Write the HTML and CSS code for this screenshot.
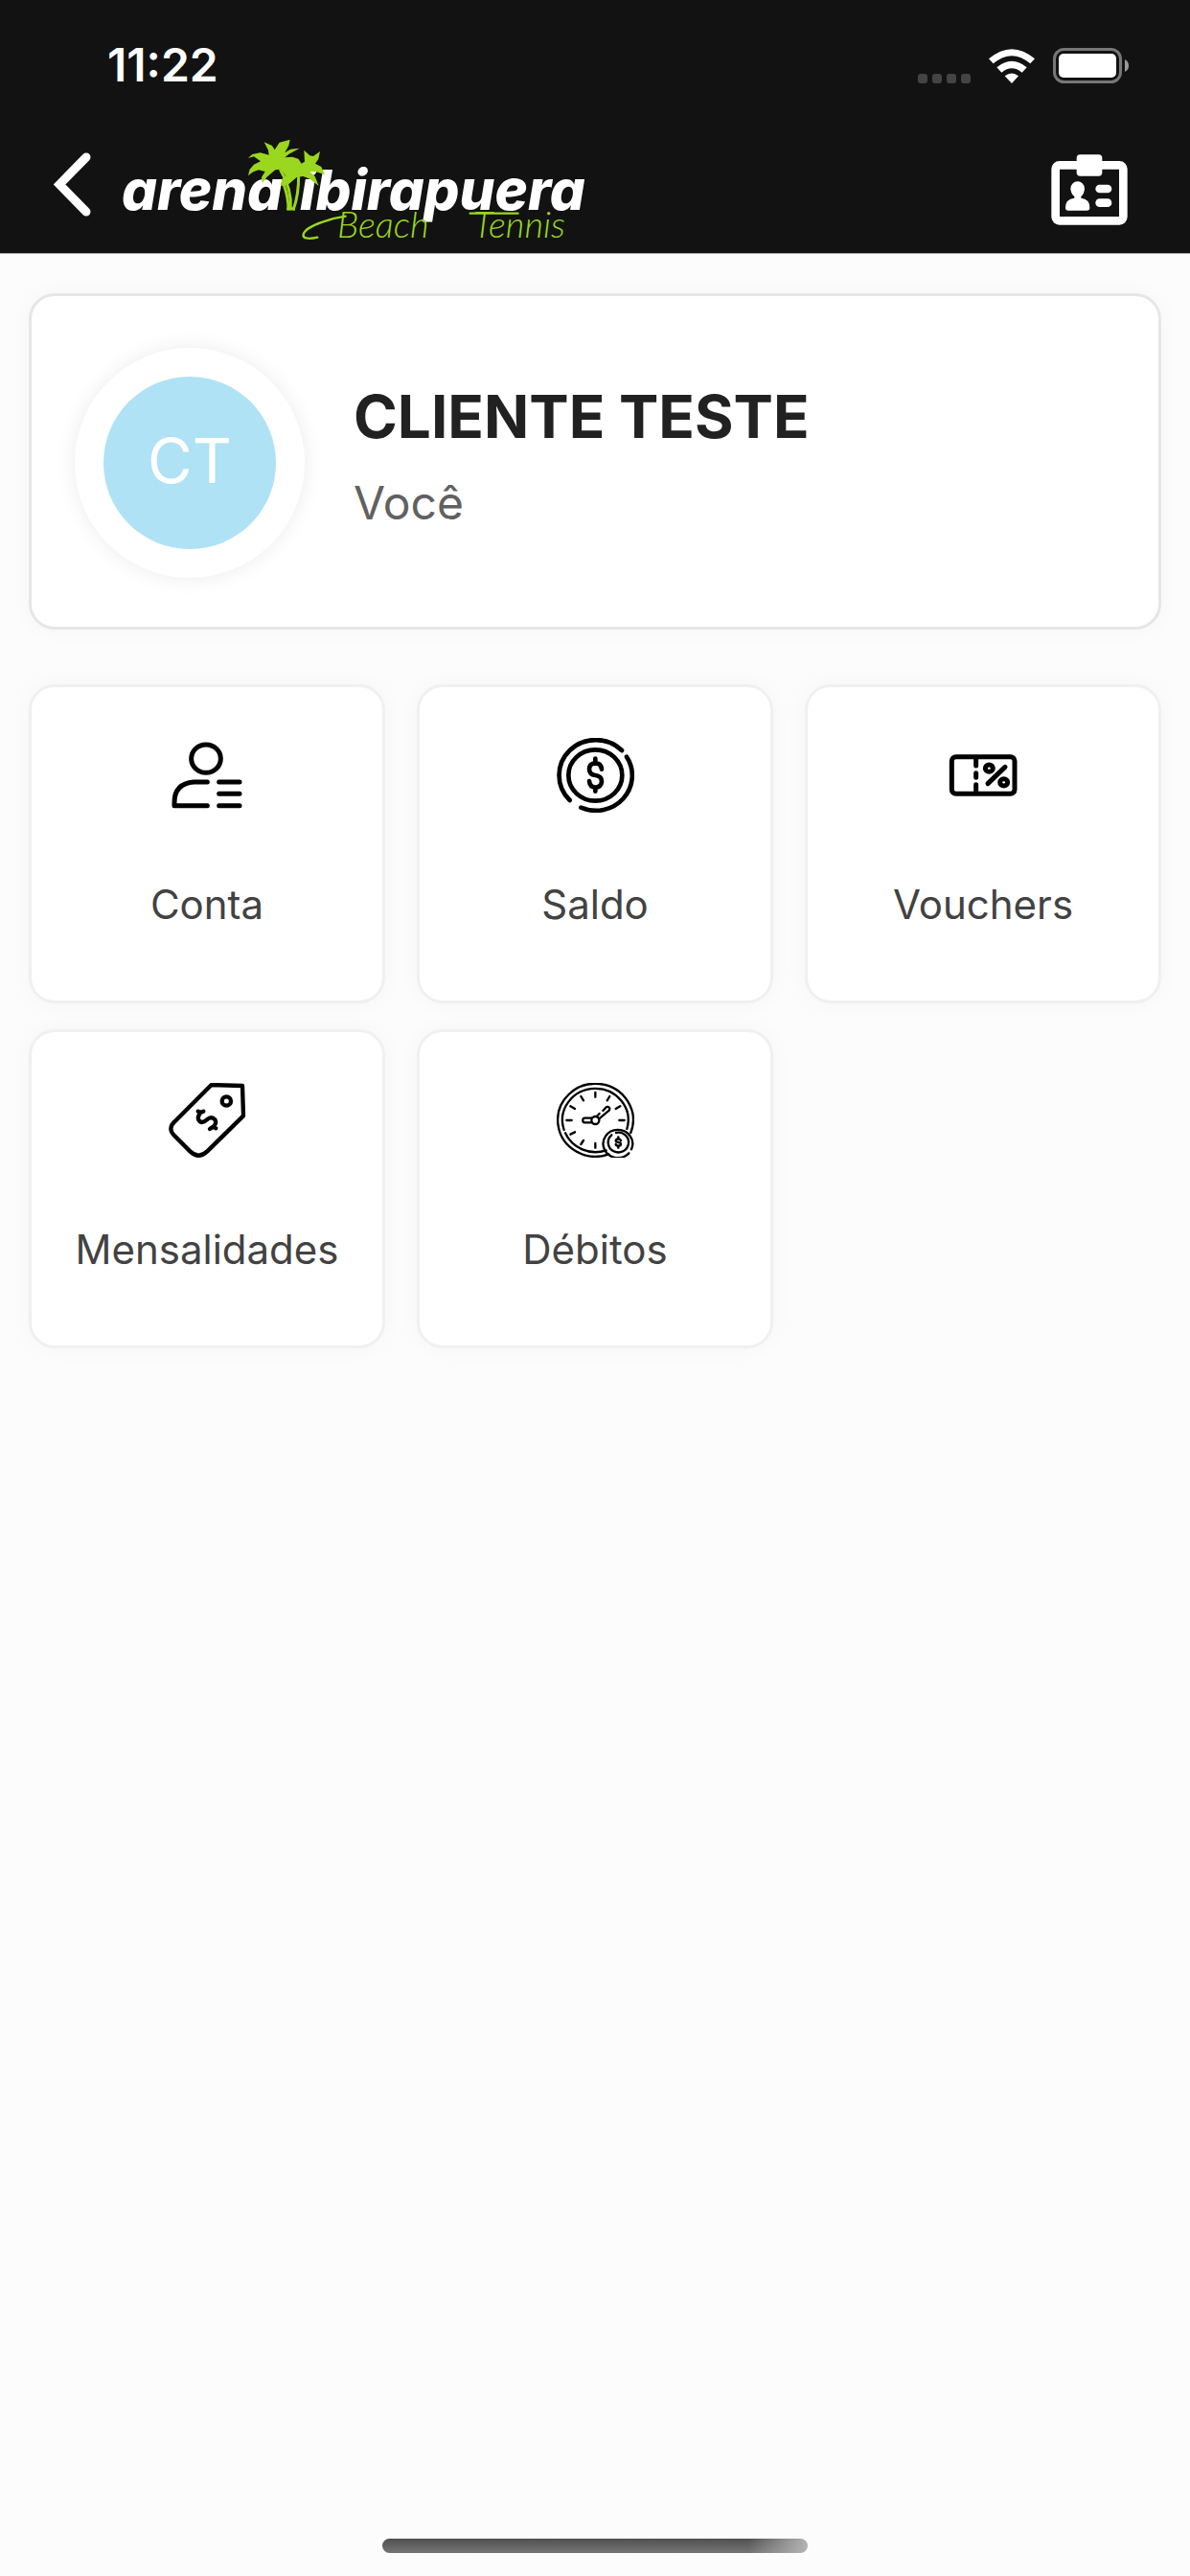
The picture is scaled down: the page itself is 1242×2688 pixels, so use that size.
FILE: index.html
```html
<!DOCTYPE html>
<html lang="pt-BR">
<head>
    <meta charset="UTF-8">
    <meta name="viewport" content="width=device-width, initial-scale=1.0">
    <title>Arena Ibirapuera</title>
    <link rel="stylesheet" href="styles.css">
</head>
<body>
    <header class="header">
        <div class="status-bar">
            <span class="time">11:22</span>
            <div class="status-icons">
                <div class="signal"><i></i><i></i><i></i><i></i></div>
                <svg class="wifi" viewBox="305 87 144 108" fill="#fff">
                    <path d="M305 118 Q377 57 449 118 L435 133 Q377 84 319 133 Z"/>
                    <path d="M330 145 Q377 106 424 145 L409 161 Q377 135 345 161 Z"/>
                    <path d="M355 172 Q377 155 398 172 L377 195 Z"/>
                </svg>
                <svg class="battery" viewBox="0 0 79 37">
                    <rect x="1.5" y="1.5" width="69" height="34" rx="10" fill="none" stroke="#777" stroke-width="3"/>
                    <rect x="6" y="6" width="60" height="25" rx="5" fill="#fff"/>
                    <path d="M75 12 Q79 14 79 18.500 Q79 23 75 25 Z" fill="#999"/>
                </svg>
            </div>
        </div>

        <div class="top-bar">
            <button class="back" type="button" aria-label="Voltar">
                <svg viewBox="0 0 39 67">
                    <path d="M34 5 L6 33.500 L34 62" fill="none" stroke="#fff" stroke-width="9" stroke-linecap="round"/>
                </svg>
            </button>
            <svg class="logo" viewBox="0 0 484 132">
                <text class="logo-name" x="-1" y="87">arena</text>
                <text class="logo-name" x="185" y="87">ibirapuera</text>
                <!-- coqueiros -->
                <g transform="translate(-18 -2) scale(.3333)" fill="#9ad71e">
                    <path d="M497 55 L522 66 L530 79 L545 56 L578 47 L574 66 L562 88 L580 77 L608 74 L575 92 L562 103 L585 101 L604 107 L614 122 L624 116 L622 80 L640 97 L651 99 L672 84 L667 108 L657 122 L676 132 L687 156 L660 148 L640 147 L656 162 L668 192 L640 170 L620 162 L600 164 L572 188 L550 192 L552 172 L564 160 L550 140 L532 142 L516 155 L505 165 L492 183 L489 165 L500 147 L480 142 L463 148 L447 160 L452 140 L465 125 L486 115 L465 100 L447 105 L460 93 L485 88 L512 95 L510 80 Z"/>
                    <g fill="none" stroke="#9ad71e" stroke-width="9">
                        <path d="M547 140 Q584 200 580 266"/>
                        <path d="M558 186 Q574 230 573 268"/>
                        <path d="M605 155 Q606 220 588 268"/>
                        <path d="M568 264 H594"/>
                    </g>
                    <g fill="none" stroke="#9ad71e" stroke-width="7" stroke-linecap="round">
                        <path d="M664 353 C600 368 605 330 680 305 Q715 292 752 287"/>
                        <path d="M1142 278 H1292"/>
                    </g>
                </g>
                <text class="logo-sub" x="224" y="116">Beach</text>
                <text class="logo-sub" x="366" y="116">Tennis</text>
            </svg>
            <button class="badge" type="button" aria-label="Carteirinha">
                <svg viewBox="501 423 240 222" fill="#fff">
                    <rect x="515" y="457" width="212" height="174" rx="12" fill="none" stroke="#fff" stroke-width="26"/>
                    <rect x="581" y="424" width="80" height="67" rx="11"/>
                    <path d="M562 531 A22 23 0 0 1 606 531 Q605 546 595 555 V560 Q622 563 622 590 Q622 599 613 599 H555 Q546 599 546 590 Q546 563 574 560 V555 Q563 546 562 531 Z"/>
                    <rect x="640" y="518" width="51" height="26" rx="13"/>
                    <rect x="640" y="562" width="51" height="26" rx="13"/>
                </svg>
            </button>
        </div>
    </header>

    <main class="content">
        <section class="profile">
            <div class="avatar"><span>CT</span></div>
            <div class="profile-text">
                <h1>CLIENTE TESTE</h1>
                <p>Você</p>
            </div>
        </section>

        <nav class="menu">
            <a class="card" href="#conta">
                <svg viewBox="466 210 243 234" stroke-width="15">
                    <ellipse cx="583" cy="275" rx="46" ry="44"/>
                    <path d="M587 348 H545 Q484 353 484 412 V422 H587 M624 348 H688 M624 385 H688 M624 422 H688"/>
                </svg>
                <span>Conta</span>
            </a>
            <a class="card" href="#saldo">
                <svg viewBox="474 210 243 234" stroke-width="14">
                    <ellipse cx="595" cy="327" rx="84" ry="80"/>
                    <path d="M678 249 A114 110 0 1 0 515 405"/>
                    <path d="M693 269 A114 110 0 0 1 550 428"/>
                    <path d="M595 275 V287 M595 366 V377 M615 308 Q613 289 595 289 Q576 290 576 308 Q577 325 595 327 Q615 329 615 347 Q613 364 595 365 Q578 364 576 345"/>
                </svg>
                <span>Saldo</span>
            </a>
            <a class="card" href="#vouchers">
                <svg viewBox="496 210 243 234" stroke-width="15">
                    <rect x="518" y="269" width="197" height="116" rx="13"/>
                    <path d="M594 272 V297 M594 320 V334 M594 356 V382 M631 353 L685 301"/>
                    <ellipse cx="635" cy="305" rx="12" ry="11"/>
                    <ellipse cx="681" cy="349" rx="12" ry="11"/>
                </svg>
                <span>Vouchers</span>
            </a>
            <a class="card" href="#mensalidades">
                <svg viewBox="466 210 243 234" stroke-width="13">
                    <path d="M600 216 L697 219 L700 313 L587 424 Q560 450 533 424 L484 375 Q462 353 484 332 Z"/>
                    <circle cx="647" cy="267" r="14"/>
                    <path d="M558 299 L565 303 L575 299 M567 302 Q552 320 563 330 Q573 338 586 325 Q600 313 611 325 Q618 334 606 347 L614 352 M606 347 L595 354"/>
                </svg>
                <span>Mensalidades</span>
            </a>
            <a class="card" href="#debitos">
                <svg viewBox="471 210 243 234" stroke-width="7">
                    <path d="M703 366 A118 114 0 1 0 634 433"/>
                    <path d="M494 357 A103 99 0 1 1 691 354 M498 367 A103 99 0 0 0 626 421"/>
                    <path d="M592 240 V254 M592 399 V413 M502 327 H518 M667 327 H683 M547 252 L555 265 M637 252 L629 265 M514 283 L528 291 M670 283 L656 291 M514 371 L528 364 M555 390 L547 402"/>
                    <circle cx="592" cy="327" r="12"/>
                    <path d="M580 320 H558 Q553 320 553 327 Q553 334 558 334 H580 M596 315 L605 306 M616 297 L625 287 Q632 281 637 290 L636 295 L604 322"/>
                    <path d="M697 430 A46 44 0 1 1 705 418"/>
                    <path d="M643 373 A32 31 0 1 0 657 366"/>
                    <path d="M664 379 V385 M664 407 V413 M672 390 Q669 385 664 385 Q656 386 656 391 Q656 395 664 396 Q672 397 672 402 Q671 407 664 407 Q657 407 656 402"/>
                </svg>
                <span>Débitos</span>
            </a>
        </nav>
    </main>

    <div class="home-indicator"></div>
</body>
</html>
```
FILE: styles.css
```css
* {
    box-sizing: border-box;
}
body {
    margin: 0;
    min-height: 100vh;
    display: flex;
    flex-direction: column;
    background-color: #fcfcfc;
    font-family: Inter, "Liberation Sans", sans-serif;
}
button {
    padding: 0;
    border: none;
    background: none;
    cursor: pointer;
}
svg {
    display: block;
}

/* Cabeçalho */
.header {
    background-color: #121212;
    color: #fff;
    box-shadow: 0 1px 0 #a8a8a8;
}
.status-bar {
    display: flex;
    justify-content: space-between;
    align-items: center;
    height: 132px;
    padding: 4px 64px 0 112px;
}
.time {
    font-size: 48px;
    font-weight: 600;
    line-height: 60px;
}
.status-icons {
    display: flex;
    align-items: flex-end;
    gap: 19px;
}
.signal {
    display: flex;
    gap: 5px;
}
.signal i {
    width: 10px;
    height: 10px;
    border-radius: 3px;
    background-color: #444;
}
.wifi {
    width: 48px;
    height: 36px;
}
.battery {
    width: 79px;
    height: 37px;
}
.top-bar {
    display: flex;
    align-items: center;
    height: 132px;
    padding: 0 65px 0 56px;
}
.back {
    margin-bottom: 12px;
}
.back svg {
    width: 39px;
    height: 67px;
}
.logo {
    width: 484px;
    height: 132px;
    margin-left: 33px;
}
.logo-name {
    font-size: 58px;
    font-weight: 800;
    font-style: italic;
    fill: #fff;
}
.logo-sub {
    font-family: Lato, "Liberation Sans", sans-serif;
    font-size: 38px;
    font-weight: 300;
    font-style: italic;
    fill: #9ad71e;
}
.badge {
    margin-left: auto;
}
.badge svg {
    width: 80px;
    height: 74px;
}

/* Perfil */
.content {
    padding: 42px 30px;
}
.profile {
    display: flex;
    align-items: flex-start;
    gap: 51px;
    padding: 54px 45px 51px;
    border: 3px solid #e6e6e6;
    border-radius: 27px;
    background-color: #fff;
    box-shadow: 0 0 24px rgba(0, 0, 0, 0.03);
}
.avatar {
    width: 240px;
    height: 240px;
    padding: 30px;
    border-radius: 50%;
    background-color: #fff;
    box-shadow: 0 0 21px rgba(0, 0, 0, 0.08);
}
.avatar span {
    display: flex;
    justify-content: center;
    align-items: center;
    height: 180px;
    padding-bottom: 6px;
    border-radius: 50%;
    background-color: #afe2f5;
    color: #fff;
    font-size: 64px;
    font-weight: 400;
}
.profile-text {
    padding-top: 36px;
}
.profile-text h1 {
    margin: 0 0 24px;
    color: #212121;
    font-size: 62px;
    font-weight: 700;
    line-height: 72px;
}
.profile-text p {
    margin: 0;
    color: #616161;
    font-size: 48px;
    font-weight: 400;
    line-height: 60px;
}

/* Menu */
.menu {
    display: grid;
    grid-template-columns: repeat(3, 1fr);
    gap: 27px 33px;
    margin-top: 57px;
}
.card {
    display: flex;
    flex-direction: column;
    align-items: center;
    gap: 69px;
    padding: 53px 0 73px;
    border: 3px solid #f0f0f0;
    border-radius: 27px;
    background-color: #fff;
    box-shadow: 0 0 24px rgba(0, 0, 0, 0.03);
    color: #424242;
    font-size: 42px;
    font-weight: 400;
    line-height: 54px;
    text-decoration: none;
}
.card svg {
    width: 81px;
    height: 78px;
    fill: none;
    stroke: #000;
    stroke-linecap: round;
    stroke-linejoin: round;
}

.home-indicator {
    width: 444px;
    height: 15px;
    margin: auto auto 24px;
    border-radius: 8px;
    background: linear-gradient(to right, transparent 86%, #b4b4b4), linear-gradient(#505050, #757575);
}
```
